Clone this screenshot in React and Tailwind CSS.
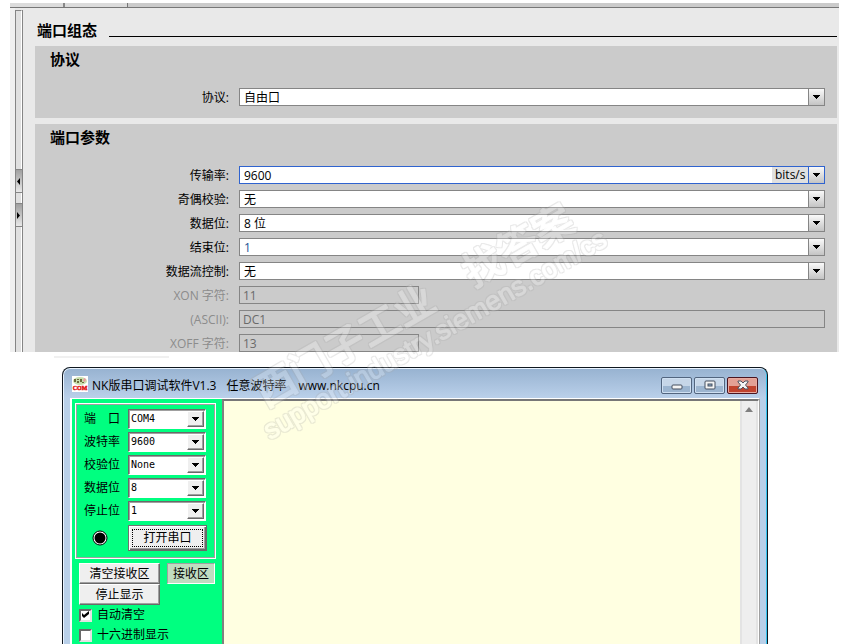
import React, { useState } from "react";

const UI_FONT = "font-['Open_Sans','Noto_Sans_CJK_SC',sans-serif]";
const MONO_FONT = "font-['DejaVu_Sans_Mono','Noto_Sans_CJK_SC',monospace]";

const portFields = [
  { id: "baud", label: "传输率:", value: "9600", unit: "bits/s", active: true },
  { id: "parity", label: "奇偶校验:", value: "无" },
  { id: "data", label: "数据位:", value: "8 位" },
  { id: "stop", label: "结束位:", value: "1", accent: true },
  { id: "flow", label: "数据流控制:", value: "无" },
];

const asciiFields = [
  { id: "xon", label: "XON 字符:", value: "11", short: true },
  { id: "ascii", label: "(ASCII):", value: "DC1" },
  { id: "xoff", label: "XOFF 字符:", value: "13", short: true },
];

const serialFields = [
  { id: "port", label: "端　口", value: "COM4" },
  { id: "rate", label: "波特率", value: "9600" },
  { id: "check", label: "校验位", value: "None" },
  { id: "bits", label: "数据位", value: "8" },
  { id: "stopbits", label: "停止位", value: "1" },
];

const DownArrow = () => (
  <svg width="7" height="4" viewBox="0 0 7 4" shapeRendering="crispEdges">
    <path d="M0 0h7v1H6v1H5v1H4v1H3V3H2V2H1V1H0z" fill="#000" />
  </svg>
);

const FieldRow = ({ id, label, disabled, children }) => (
  <div className="flex items-center h-[18px]">
    <label
      htmlFor={id}
      className={`w-[194px] shrink-0 mr-[10px] pt-[2px] text-right ${
        disabled ? "text-[#8c8c8c]" : "text-black"
      }`}
    >
      {label}
    </label>
    {children}
  </div>
);

const SelectField = ({ id, label, value, unit, active, accent }) => (
  <FieldRow id={id} label={label}>
    <div
      className={`flex flex-1 h-full bg-white border ${
        active ? "border-[#2f63cf]" : "border-[#858585]"
      }`}
    >
      <select
        id={id}
        className={`flex-1 min-w-0 h-full appearance-none pl-1 pt-px bg-transparent outline-none leading-4 ${
          accent ? "text-[#1a5296]" : "text-black"
        }`}
      >
        <option>{value}</option>
      </select>
      {unit && (
        <span className="w-9 pl-[3px] bg-[#e0e0e0] leading-4">{unit}</span>
      )}
      <span
        className={`flex items-center justify-center w-4 border-l bg-linear-to-b from-[#fafafa] to-[#c4c4c4] pointer-events-none ${
          active ? "border-[#2f63cf]" : "border-[#858585]"
        }`}
      >
        <DownArrow />
      </span>
    </div>
  </FieldRow>
);

const Splitter = () => (
  <div className="flex flex-col w-2 mt-[2px] shrink-0 border-x border-[#858585] bg-[#e0e0e0]">
    <div className="h-[159px] border-t border-r border-t-[#858585] border-r-white" />
    <button
      aria-label="collapse"
      className="flex items-center justify-center h-6 pr-px border-y border-[#858585] bg-linear-to-b from-[#a0a0a0] to-[#e8e8e8]"
    >
      <svg width="3" height="7" viewBox="0 0 3 7">
        <path d="M3 0v7L0 3.500z" />
      </svg>
    </button>
    <div className="h-[10px] border-r border-white" />
    <button
      aria-label="expand"
      className="flex items-center justify-center h-6 pr-px border-y border-[#858585] bg-linear-to-b from-[#a0a0a0] to-[#e8e8e8]"
    >
      <svg width="3" height="7" viewBox="0 0 3 7">
        <path d="M0 0v7l3-3.500z" />
      </svg>
    </button>
    <div className="flex-1 border-r border-white" />
  </div>
);

const PortConfig = () => (
  <section className="bg-[#e9e9e9] text-xs">
    <div className="flex h-[5px] bg-[#cbcbcb] border-b border-[#777]">
      <span className="w-[55px] border-r-2 border-[#888] bg-[#dcdcdc]" />
      <span className="w-[63px] border-r border-[#777] bg-[#dcdcdc]" />
    </div>
    <div className="flex">
      <div className="w-[5px] shrink-0 bg-[#f0f0f0]" />
      <Splitter />
      <div className="flex-1 pl-3 pr-[2px]">
        <div className="flex items-center h-[38px] pt-[6px] pl-[2px]">
          <h1 className="text-[15px] leading-5 font-bold">端口组态</h1>
          <div className="flex-1 h-px mt-3 ml-3 bg-black" />
        </div>
        <div className="h-[72px] mb-[6px] pt-[3px] pr-3 bg-[#cbcbcb]">
          <h2 className="pl-[15px] mb-[19px] text-[15px] leading-5 font-bold">
            协议
          </h2>
          <SelectField id="protocol" label="协议:" value="自由口" />
        </div>
        <div className="pt-[3px] pr-3 bg-[#cbcbcb]">
          <h2 className="pl-[15px] mb-[19px] text-[15px] leading-5 font-bold">
            端口参数
          </h2>
          <div className="flex flex-col gap-[6px]">
            {portFields.map((field) => (
              <SelectField key={field.id} {...field} />
            ))}
            {asciiFields.map(({ id, label, value, short }) => (
              <FieldRow key={id} id={id} label={label} disabled>
                <input
                  id={id}
                  disabled
                  defaultValue={value}
                  className={`h-full min-w-0 pl-[3px] border border-[#858585] bg-[#cbcbcb] text-[#6a6a6a] ${
                    short ? "w-[180px]" : "flex-1"
                  }`}
                />
              </FieldRow>
            ))}
          </div>
        </div>
      </div>
    </div>
  </section>
);

const AppIcon = () => (
  <svg width="16" height="16" viewBox="0 0 16 16">
    <rect width="16" height="16" fill="#fff" />
    <ellipse cx="8" cy="5" rx="7" ry="4" fill="#c9dfae" />
    <path
      d="M2 3h2v3H2zM5 3h2v1H5zM5 5h2v2H5zM8 3h2v3H8zM10 6h2v1h-2z"
      fill="#6b6a3c"
    />
    <path d="M12 2l2 1-1 3-2-1z" fill="#e99aa0" />
    <text
      x="8"
      y="14"
      textAnchor="middle"
      fill="#e01010"
      stroke="#e01010"
      strokeWidth="0.4"
      className="text-[6px] font-bold font-['Liberation_Serif',serif]"
    >
      COM
    </text>
  </svg>
);

const captionButton =
  "flex items-center justify-center w-[31px] h-[17px] rounded-xs border border-[#52657f] bg-linear-to-b from-[#c6d6e8] from-50% to-[#9cb5d0] to-50% shadow-[inset_0_0_0_1px_#cfe0f2]";

const TitleBar = () => (
  <header className="flex items-center h-[29px] px-2 text-xs text-black">
    <AppIcon />
    <h1 className="flex gap-[10px] ml-1 pt-[8px] pb-[3px] leading-[18px] whitespace-pre">
      <span>NK版串口调试软件V1.3</span>
      <span>任意波特率</span>
      <span className="ml-[2px]">www.nkcpu.cn</span>
    </h1>
    <div className="flex gap-[2px] ml-auto pt-[3px]">
      <button aria-label="minimize" className={captionButton}>
        <svg width="12" height="12" viewBox="0 0 12 12">
          <rect x="1" y="6" width="10" height="4" rx="1" fill="#f4f4f4" stroke="#454f5f" />
        </svg>
      </button>
      <button aria-label="maximize" className={captionButton}>
        <svg width="12" height="10" viewBox="0 0 12 10">
          <rect x="1" y="1" width="10" height="8" rx="1" fill="#f4f4f4" stroke="#454f5f" />
          <rect x="4" y="4" width="4" height="2" fill="#8fb0d0" stroke="#454f5f" />
        </svg>
      </button>
      <button
        aria-label="close"
        className="flex items-center justify-center w-[31px] h-[17px] rounded-xs border border-[#4a1420] bg-linear-to-b from-[#e3a095] from-50% to-[#c0432e] to-50% shadow-[inset_0_0_0_1px_#e8aaa0]"
      >
        <svg width="12" height="10" viewBox="0 0 12 10">
          <path
            d="M1 1h3l2 2 2-2h3v1L8.500 5 11 8v1H8L6 7 4 9H1V8l2.500-3L1 2z"
            fill="#f4f4f4"
            stroke="#4f5360"
          />
        </svg>
      </button>
    </div>
  </header>
);

const raised =
  "border border-t-white border-l-white border-r-[#696969] border-b-[#696969] bg-[#efefef] shadow-[inset_-1px_-1px_0_#a0a0a0]";

const ClassicCheckbox = ({ id, label, defaultChecked }) => {
  const [checked, setChecked] = useState(defaultChecked);
  return (
    <label htmlFor={id} className="relative flex items-center gap-[5px] h-5">
      <input
        id={id}
        type="checkbox"
        checked={checked}
        onChange={(e) => setChecked(e.target.checked)}
        className="size-[13px] appearance-none bg-white border-2 border-t-[#696969] border-l-[#696969] border-r-[#e3e3e3] border-b-[#e3e3e3]"
      />
      {checked && (
        <svg
          width="7"
          height="7"
          viewBox="0 0 7 7"
          className="absolute left-[3px] top-[6px] pointer-events-none"
        >
          <path d="M0 2l2 2 5-4v3L2 7 0 5z" />
        </svg>
      )}
      {label}
    </label>
  );
};

const SerialPanel = () => (
  <aside className="w-[150px] shrink-0 pt-[5px] pl-1 bg-[#00ff80] text-xs">
    <div className="w-[139px] border border-[#a0a0a0] outline outline-white pt-1 pb-[6px] pl-[7px]">
      <div className="flex flex-col gap-[3px]">
        {serialFields.map(({ id, label, value }) => (
          <div key={id} className="flex items-center h-5">
            <label htmlFor={id} className="w-11">
              {label}
            </label>
            <div className="flex w-[78px] h-5 border border-t-[#696969] border-l-[#696969] border-r-white border-b-white bg-white shadow-[inset_1px_1px_0_#a0a0a0]">
              <select
                id={id}
                className={`flex-1 min-w-0 appearance-none bg-transparent pl-[2px] text-[10px] outline-none ${MONO_FONT}`}
              >
                <option>{value}</option>
              </select>
              <span
                className={`flex items-center justify-center w-[17px] my-px mr-px pointer-events-none ${raised}`}
              >
                <DownArrow />
              </span>
            </div>
          </div>
        ))}
      </div>
      <div className="flex items-center mt-1">
        <svg width="16" height="16" viewBox="0 0 16 16" className="ml-2 mr-5">
          <circle cx="8" cy="8" r="7" fill="#fff" stroke="#000" />
          <circle cx="8" cy="8" r="5.500" />
        </svg>
        <button className="w-[79px] h-[26px] p-[3px] bg-[#efefef] border border-t-[#707070] border-l-[#707070] border-r-[#696969] border-b-[#696969] shadow-[inset_1px_1px_0_#fff,inset_-1px_-1px_0_#696969,inset_-2px_-2px_0_#a0a0a0]">
          <span className="block h-full border border-dotted border-black leading-4">
            打开串口
          </span>
        </button>
      </div>
    </div>
    <div className="flex gap-[7px] mt-[5px] ml-[3px]">
      <button className={`w-[81px] h-[21px] leading-4 ${raised}`}>清空接收区</button>
      <button className="w-12 h-[21px] border border-[#a0a0a0] border-r-white border-b-white bg-[#c0dcc0] leading-4">
        接收区
      </button>
    </div>
    <button className={`block w-[81px] h-[21px] ml-[3px] leading-4 ${raised}`}>
      停止显示
    </button>
    <div className="ml-[3px]">
      <ClassicCheckbox id="autoclear" label="自动清空" defaultChecked />
      <ClassicCheckbox id="hex" label="十六进制显示" defaultChecked={false} />
    </div>
  </aside>
);

const SerialWindow = () => (
  <section className="flex flex-col flex-1 ml-[52px] mr-[71px] border border-b-0 border-[#101820] rounded-t-lg bg-[#b9d0e9] shadow-[inset_1px_1px_0_#eaf4ff,inset_-1px_0_0_#35c5f0]">
    <div className="mt-px mx-px rounded-t-md bg-linear-to-b from-[#98b3d1] to-[#bad0ea]">
      <TitleBar />
    </div>
    <div className="flex flex-1 ml-[7px] mr-[7px] border-t border-l-2 border-white border-r border-r-[#a0a0a0]">
      <SerialPanel />
      <div className="flex flex-1 border-t-2 border-l-2 border-t-[#777] border-l-[#808080] border-r border-r-white">
        <textarea
          aria-label="接收区"
          className="flex-1 min-w-0 resize-none bg-[#ffffe1] outline-none"
        />
        <div className="w-[18px] border-x-2 border-[#e3e3e3] bg-[#eee]">
          <button aria-label="scroll up" className="flex justify-center w-full pt-[6px]">
            <svg width="8" height="5" viewBox="0 0 8 5">
              <path d="M4 0l4 5H0z" fill="#808080" />
            </svg>
          </button>
        </div>
      </div>
    </div>
  </section>
);

// White letters with a one pixel grey rim, faded as a whole
const Watermark = () => (
  <svg
    width="390"
    height="270"
    viewBox="0 0 390 270"
    className="absolute left-[236px] top-[190px] pointer-events-none opacity-25"
    fill="#ffffff"
    stroke="#ffffff"
    strokeLinejoin="round"
  >
    <filter id="rim" x="-10%" y="-10%" width="120%" height="120%">
      <feMorphology in="SourceAlpha" operator="dilate" radius="1" result="fat" />
      <feFlood floodColor="#a8a8a8" />
      <feComposite in2="fat" operator="in" />
      <feMerge>
        <feMergeNode />
        <feMergeNode in="SourceGraphic" />
      </feMerge>
    </filter>
    <g filter="url(#rim)">
      <g transform="translate(34 250) rotate(-30)">
        <text
          x="12"
          y="-30"
          strokeWidth="1"
          className="text-[40px] font-medium font-['Noto_Sans_CJK_SC',sans-serif]"
        >
          西门子工业　找答案
        </text>
        <text
          x="0"
          y="0"
          strokeWidth="1"
          className="text-[27px] font-['Liberation_Sans',sans-serif]"
        >
          support.industry.siemens.com/cs
        </text>
      </g>
    </g>
  </svg>
);

const App = () => {
  return (
    <div
      className={`relative flex flex-col min-h-screen px-[10px] pt-[3px] bg-white overflow-hidden ${UI_FONT}`}
    >
      <PortConfig />
      <div className="w-[115px] h-[2px] mt-1 mb-[9px] ml-11 bg-[#f0f0f0]" />
      <SerialWindow />
      <Watermark />
    </div>
  );
};

export default App;
